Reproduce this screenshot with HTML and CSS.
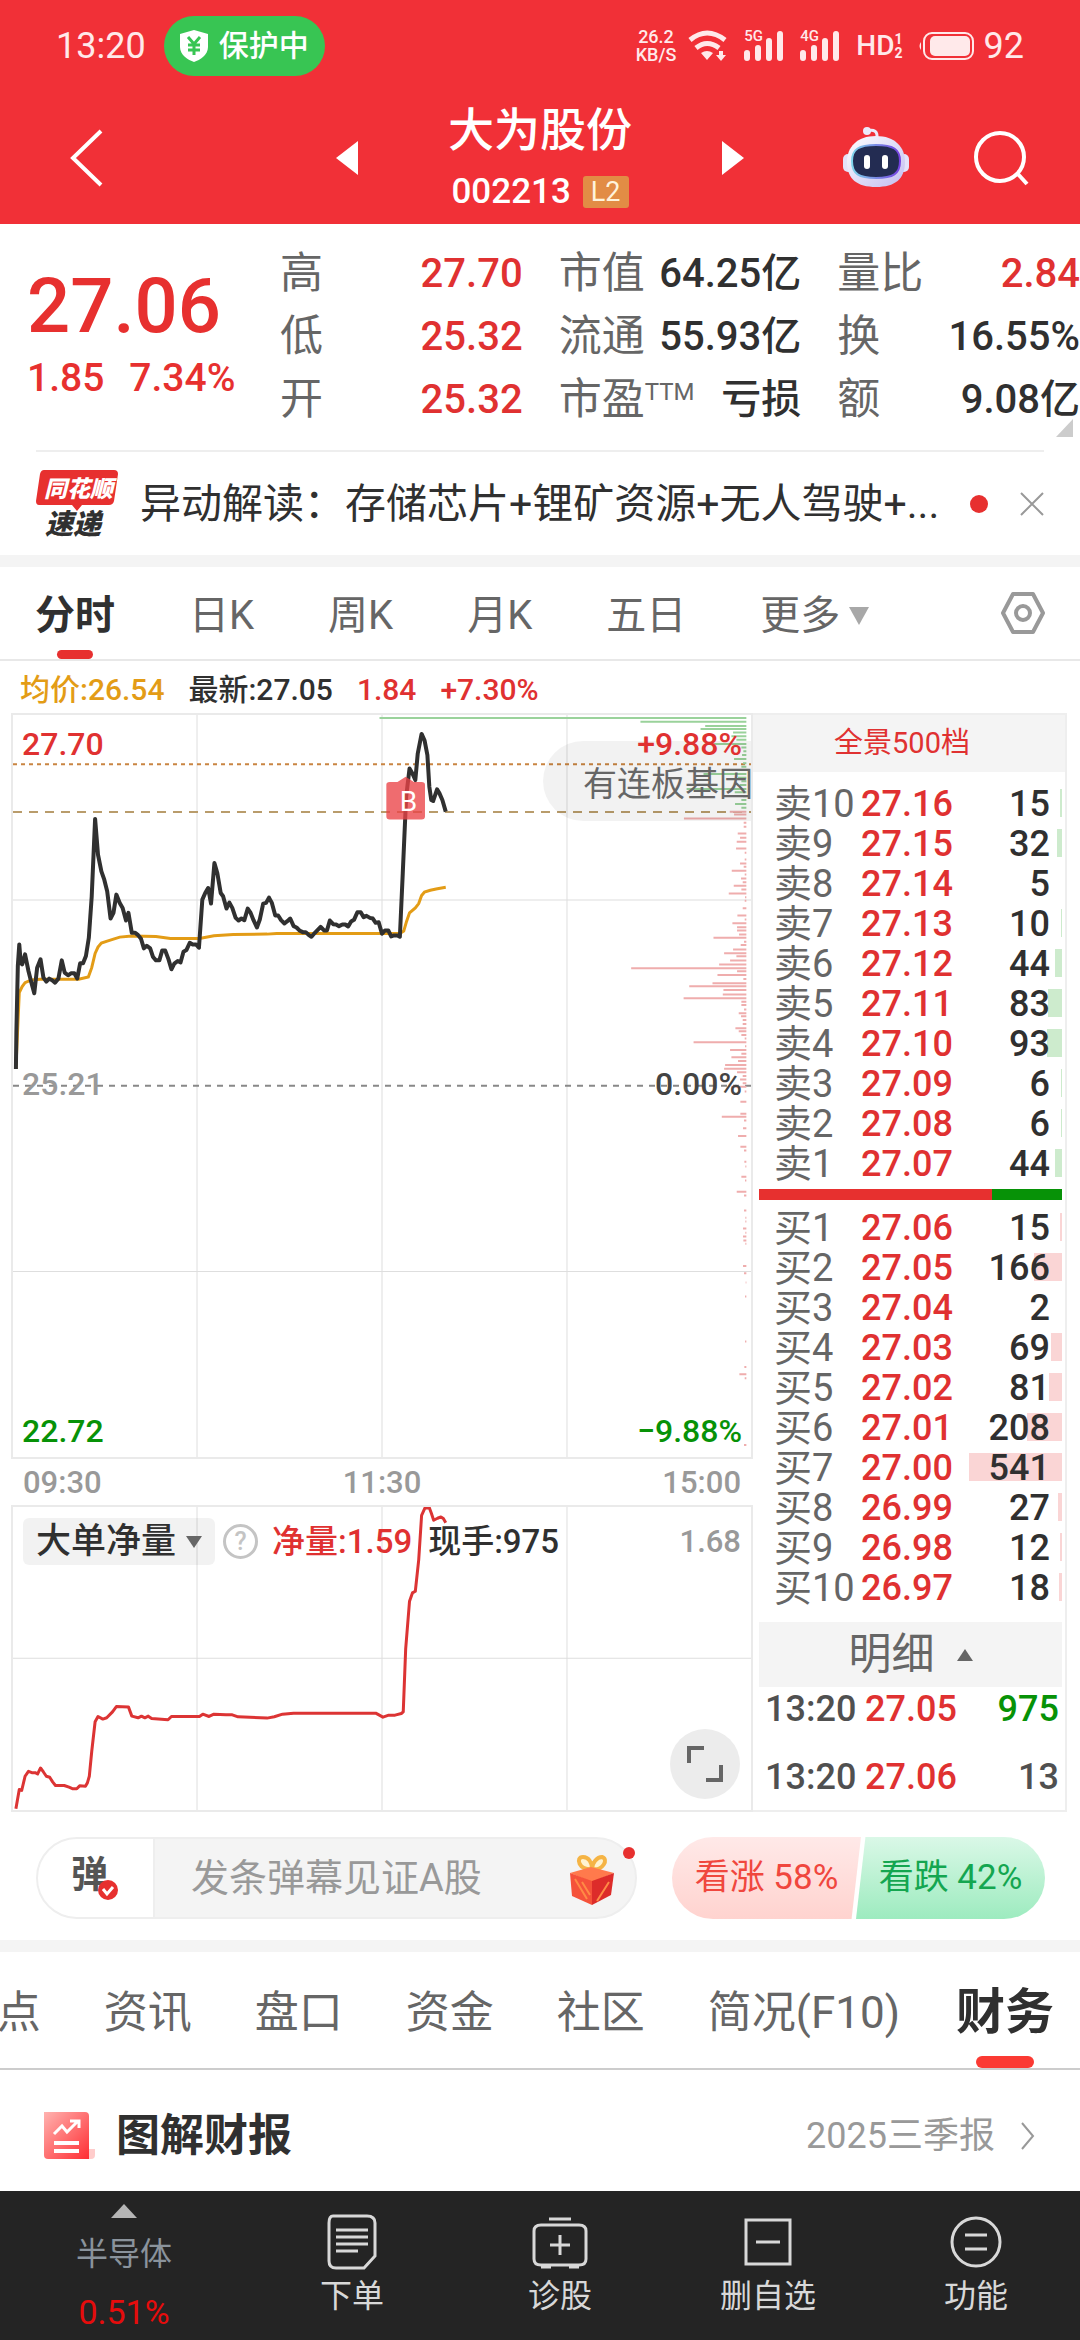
FILE: index.html
```html
<!DOCTYPE html>
<html lang="zh-CN">
<head>
<meta charset="utf-8">
<meta name="viewport" content="width=device-width, initial-scale=1">
<title>大为股份 002213</title>
<link rel="stylesheet" href="styles.css">
</head>
<body>
<header class="top">
  <div class="status">
    <time>13:20</time>
    <span class="guard">
      <svg width="28" height="32" viewBox="0 0 28 32"><path d="M14 0L28 4V17C28 25 20 30 14 32C8 30 0 25 0 17V4Z" fill="#fff"/><path d="M8 7L14 14L20 7M14 14V25M8 15H20M8 20H20" stroke="#38c553" stroke-width="3" fill="none"/></svg>
      保护中
    </span>
    <span class="status-right">
      <span class="speed"><span>26.2</span><span>KB/S</span></span>
      <svg class="wifi" width="40" height="30" viewBox="0 0 40 30"><g fill="none" stroke="#ffe9ea" stroke-width="5"><path d="M2 9Q19 -5 37 9"/><path d="M8 17Q19 8 31 17"/></g><path d="M13 22Q19 18 25 22L19 29ZM31 20H35V24H38L33 30L28 24H31Z" fill="#ffe9ea"/></svg>
      <span class="signal"><small>5G</small><svg width="40" height="30" viewBox="0 0 40 30"><path d="M3 22V27M14 17V27M25 10V27M36 3V27" stroke="#ffe9ea" stroke-width="6" stroke-linecap="round"/></svg></span>
      <span class="signal"><small>4G</small><svg width="40" height="30" viewBox="0 0 40 30"><path d="M3 22V27M14 17V27M25 10V27M36 3V27" stroke="#ffe9ea" stroke-width="6" stroke-linecap="round"/></svg></span>
      <span class="hd">HD<small>1<br>2</small></span>
      <svg class="battery" width="55" height="28" viewBox="0 0 55 28"><rect x="5" y="1" width="49" height="26" rx="8" fill="none" stroke="#ffe9ea" stroke-width="2"/><rect x="11" y="4" width="40" height="20" rx="5" fill="#ffe9ea"/><path d="M2 10Q-1 14 2 18Z" fill="#ffe9ea"/></svg>
      <span>92</span>
    </span>
  </div>
  <nav class="titlebar">
    <button class="bare back" aria-label="返回"><svg width="34" height="58" viewBox="0 0 34 58"><path d="M31 2L3 29L31 56" fill="none" stroke="#fff" stroke-width="4"/></svg></button>
    <div class="stock">
      <button class="bare" aria-label="上一只"><svg width="22" height="34" viewBox="0 0 22 34"><path d="M22 0V34L0 17Z" fill="#fff"/></svg></button>
      <div class="name"><h1>大为股份</h1><p>002213 <b>L2</b></p></div>
      <button class="bare" aria-label="下一只"><svg width="22" height="34" viewBox="0 0 22 34"><path d="M0 0V34L22 17Z" fill="#fff"/></svg></button>
    </div>
    <div class="tools">
      <button class="bare" aria-label="助手"><svg width="66" height="62" viewBox="0 0 66 62">
        <defs><linearGradient id="shell" x1="0" y1="0" x2="1" y2="1"><stop offset="0" stop-color="#fff"/><stop offset="1" stop-color="#c3bdf0"/></linearGradient><linearGradient id="rim" x1="0" x2="1"><stop offset="0" stop-color="#7fd4ea"/><stop offset="1" stop-color="#7440e0"/></linearGradient></defs>
        <path d="M24 4Q35 1 34 11" fill="none" stroke="#eceafa" stroke-width="3"/><circle cx="24" cy="4" r="4" fill="#eceafa"/>
        <rect x="0" y="27" width="66" height="18" rx="5" fill="#e4e2fa"/>
        <path d="M33 9C52 9 62 20 62 35C62 52 52 60 33 60C14 60 4 52 4 35C4 20 14 9 33 9Z" fill="url(#shell)"/>
        <path d="M33 18C50 18 57 22 57 34C57 47 50 51 33 51C16 51 9 47 9 34C9 22 16 18 33 18Z" fill="#232c52" stroke="url(#rim)" stroke-width="2"/>
        <rect x="21" y="28" width="6" height="14" rx="3" fill="#fff"/><rect x="39" y="28" width="6" height="14" rx="3" fill="#fff"/></svg></button>
      <button class="bare" aria-label="搜索"><svg width="56" height="56" viewBox="0 0 56 56"><circle cx="27" cy="27" r="24" fill="none" stroke="#fff" stroke-width="4"/><path d="M44 43L54 54" stroke="#fff" stroke-width="4"/></svg></button>
    </div>
  </nav>
</header>

<main>
<section class="quote">
  <div class="last"><strong>27.06</strong><p><span>1.85</span><span>7.34%</span></p></div>
  <dl>
    <div><dt>高</dt><dd class="red">27.70</dd></div>
    <div><dt>低</dt><dd class="red">25.32</dd></div>
    <div><dt>开</dt><dd class="red">25.32</dd></div>
  </dl>
  <dl>
    <div><dt>市值</dt><dd>64.25亿</dd></div>
    <div><dt>流通</dt><dd>55.93亿</dd></div>
    <div><dt class="ttm">市盈<small>TTM</small></dt><dd>亏损</dd></div>
  </dl>
  <dl>
    <div><dt>量比</dt><dd class="red">2.84</dd></div>
    <div><dt>换</dt><dd>16.55%</dd></div>
    <div><dt>额</dt><dd>9.08亿</dd></div>
  </dl>
  <svg class="corner" width="17" height="18" viewBox="0 0 17 18"><path d="M17 0V18H0Z" fill="#ccc"/></svg>
</section>

<section class="news">
  <svg class="logo" width="82" height="68" viewBox="0 0 82 68"><path d="M8 0H78Q82 0 82 4L78 31Q77 35 73 35H46L41 41L36 35H3Q0 35 0 31L4 4Q5 0 8 0Z" fill="#e7302f"/><text x="8" y="27" class="logo-a">同花顺</text><text x="9" y="64" class="logo-b">速递</text></svg>
  <a href="#news">异动解读：存储芯片+锂矿资源+无人驾驶+...</a>
  <i class="dot"></i>
  <button class="bare" aria-label="关闭"><svg width="24" height="24" viewBox="0 0 24 24"><path d="M1 1L23 23M23 1L1 23" stroke="#999" stroke-width="2"/></svg></button>
</section>

<nav class="periods">
  <a class="on" href="#m">分时</a><a href="#d">日K</a><a href="#w">周K</a><a href="#mo">月K</a><a href="#5d">五日</a><a href="#more">更多<svg width="20" height="18" viewBox="0 0 20 18"><path d="M0 0H20L10 18Z" fill="#a8a8a8"/></svg></a>
  <button class="bare settings" aria-label="设置"><svg width="44" height="44" viewBox="0 0 44 44"><path d="M12 3H32L42 22L32 41H12L2 22Z" fill="none" stroke="#999" stroke-width="4" stroke-linejoin="round"/><circle cx="22" cy="22" r="7" fill="none" stroke="#999" stroke-width="4"/></svg></button>
</nav>

<p class="legend"><span class="avg">均价:26.54</span><span>最新:27.05</span><span class="red">1.84</span><span class="red">+7.30%</span></p>

<section class="board">
  <div class="charts">
    <div class="price">
      <svg class="plot" viewBox="24 44 1528 2235" preserveAspectRatio="none">
        <path class="grid" d="M405 44V2279M788 44V2279M1171 44V2279M24 601H1552M24 1720H1552"/>
        <path class="dash-a" d="M24 192H1552"/><path class="dash-b" d="M24 336H1552"/><path class="dash-c" d="M24 1161H1552"/>
      </svg>
      <svg class="plot" viewBox="-1764 31 2223 1535" preserveAspectRatio="none">
        <path class="vol up" d="M445 37H-660M445 45H126M445 54H321M445 60H307M445 67H405M445 75H400M445 82H415M445 91H333M445 98H430M445 106H436M445 114H432M445 122H408M445 131H435M445 138H430M445 153H316M445 161H420M445 168H430M445 176H425M445 184H265M445 191H410M445 199H435M445 207H430M445 215H411M445 223H430"/>
        <path class="vol down" d="M445 231H395M445 237H408M445 245H257M445 254H437M445 262H437M445 276H419M445 285H426M445 293H416M445 307H414M445 316H440M445 330H440M445 338H426M445 345H437M445 353H401M445 361H440M445 369H429M445 377H434M445 384H407M445 392H430M445 400H392M445 408H441M445 415H440M445 431H434M445 446H418M445 454H440M445 462H403M445 470H417M445 477H417M445 485H423M445 492H346M445 500H438M445 507H428M445 516H405M445 524H378M445 530H415M445 539H396M445 547H363M445 555H98M445 561H417M445 569H358M445 577H436M445 586H343M445 592H273M445 600H376M445 609H374M445 617H256M445 624H430M445 631H430M445 640H438M445 648H422M445 654H429M445 662H434M445 670H434M445 679H412M445 685H422M445 693H430M445 700H440M445 708H286M445 716H441M445 724H396M445 732H430M445 739H400M445 747H420M445 755H381M445 763H378M445 770H417M445 778H434M445 785H426M445 793H434M445 800H400M445 810H440M445 831H427M445 856H427M445 862H371M445 870H438M445 886H435M445 902H420M445 924H427M445 932H438M445 955H439M445 965H442M445 986H430M445 994H441M445 1017H416M445 1025H438M445 1056H438M445 1071H442M445 1079H442M445 1093H435M445 1102H442M445 1110H435M445 1118H436M445 1125H442M445 1171H435M445 1186H438M445 1205H443M445 1234H441M445 1327H441M445 1380H439M445 1395H424M445 1403H440M445 1541H438"/>
      </svg>
      <svg class="plot" viewBox="24 44 1528 2235" preserveAspectRatio="none">
        <polyline class="line-avg" points="30,1110 37,880 43,862 49,850 62,842 80,840 160,840 180,833 187,805 194,762 200,743 207,731 219,725 232,719 245,713 270,710 320,711 350,717 410,717 440,709 480,705 550,704 570,702 825,702 833,695 839,665 845,640 857,625 864,612 870,588 876,577 888,572 900,568 920,563"/>
        <polyline class="line-price" points="30,1110 31,1000 34,800 37,735 40,790 43,795 49,765 56,815 62,850 68,882 74,805 81,780 87,835 93,847 99,838 105,843 111,850 118,838 125,783 131,820 138,828 144,822 151,822 157,838 163,792 169,792 175,770 181,715 187,590 194,357 200,465 207,515 213,540 219,575 226,657 232,640 238,585 245,610 251,625 258,663 263,640 270,700 277,700 283,707 289,718 295,747 301,739 308,747 314,773 320,783 327,783 333,753 339,753 346,780 352,810 358,793 365,785 371,789 377,757 383,752 390,730 396,735 403,735 409,745 416,600 422,580 428,565 434,612 441,490 447,520 454,580 459,590 466,627 472,609 478,625 485,655 491,663 497,657 503,662 510,627 516,640 522,662 529,684 535,660 542,612 548,610 554,594 560,610 567,648 573,648 579,662 586,672 592,665 598,657 605,680 611,684 617,693 624,698 630,698 636,706 642,712 649,700 655,691 661,682 668,693 674,693 680,663 687,674 693,675 699,680 706,675 712,675 718,681 724,666 730,661 737,638 744,638 750,653 756,649 763,655 769,657 775,670 781,668 788,703 794,693 801,693 807,711 813,708 820,708 825,712 831,520 838,290 845,205 851,220 857,240 862,160 870,101 876,120 882,165 886,260 890,300 894,303 898,285 902,268 907,280 913,300 920,335"/>
        <g fill="#e83038" fill-opacity=".8"><ellipse cx="837" cy="192" rx="12" ry="17"/><ellipse cx="894" cy="276" rx="12" ry="17"/></g>
        <path d="M804 246H820L837 230L854 246H870Q877 246 877 254V350Q877 359 870 359H804Q797 359 797 350V254Q797 246 804 246Z" fill="#eb4347" fill-opacity=".78"/>
      </svg>
      <span class="tag-b">B</span>
      <span class="hint">有连板基因</span>
      <span class="mark tl red">27.70</span><span class="mark tr red">+9.88%</span>
      <span class="mark ml">25.21</span><span class="mark mr">0.00%</span>
      <span class="mark bl green">22.72</span><span class="mark br green">−9.88%</span>
    </div>
    <div class="axis"><span>09:30</span><span>11:30</span><span>15:00</span></div>
    <div class="flow">
      <svg class="plot" viewBox="24 380 1528 917" preserveAspectRatio="none">
        <path class="grid" d="M405 380V1297M788 380V1297M1171 380V1297M24 838H1552"/>
        <polyline class="line-flow" points="30,1293 37,1235 42,1238 49,1195 56,1180 63,1184 70,1184 75,1188 81,1170 87,1182 93,1195 100,1198 106,1212 112,1223 130,1223 140,1228 148,1233 156,1233 162,1224 174,1225 178,1215 182,1195 187,1120 194,1030 200,1014 210,1022 218,1018 230,1000 238,984 263,985 270,1013 283,1018 290,1013 297,1018 304,1013 311,1020 345,1024 352,1014 410,1014 417,1007 430,1014 440,1007 465,1009 478,1009 490,1015 550,1019 565,1015 582,1007 605,1004 775,1004 790,1016 802,1010 815,1010 828,1005 832,1000 837,810 845,665 851,640 857,635 864,540 870,405 877,383 886,382 890,398 895,420 903,414 910,410 915,415 920,428"/>
      </svg>
      <div class="flow-head">
        <button class="pick">大单净量<svg width="16" height="12" viewBox="0 0 16 12"><path d="M0 0H16L8 12Z" fill="#666"/></svg></button>
        <button class="help" aria-label="说明">?</button>
        <span class="red">净量:1.59</span><span>现手:975</span><span class="max">1.68</span>
      </div>
      <button class="expand" aria-label="全屏"><svg width="36" height="36" viewBox="0 0 36 36"><path d="M2 17V2H17M34 19V34H19" fill="none" stroke="#666" stroke-width="4"/></svg></button>
    </div>
  </div>

  <aside class="book">
    <a class="depth" href="#depth">全景500档</a>
    <table class="sell">
      <tr><th>卖10</th><td>27.16</td><td>15<i style="width:2px"></i></td></tr>
      <tr><th>卖9</th><td>27.15</td><td>32<i style="width:5px"></i></td></tr>
      <tr><th>卖8</th><td>27.14</td><td>5</td></tr>
      <tr><th>卖7</th><td>27.13</td><td>10<i style="width:1px"></i></td></tr>
      <tr><th>卖6</th><td>27.12</td><td>44<i style="width:7px"></i></td></tr>
      <tr><th>卖5</th><td>27.11</td><td>83<i style="width:14px"></i></td></tr>
      <tr><th>卖4</th><td>27.10</td><td>93<i style="width:15px"></i></td></tr>
      <tr><th>卖3</th><td>27.09</td><td>6<i style="width:1px"></i></td></tr>
      <tr><th>卖2</th><td>27.08</td><td>6<i style="width:1px"></i></td></tr>
      <tr><th>卖1</th><td>27.07</td><td>44<i style="width:7px"></i></td></tr>
    </table>
    <div class="ratio"><i style="width:77%"></i></div>
    <table class="buy">
      <tr><th>买1</th><td>27.06</td><td>15<i style="width:2px"></i></td></tr>
      <tr><th>买2</th><td>27.05</td><td>166<i style="width:28px"></i></td></tr>
      <tr><th>买3</th><td>27.04</td><td>2</td></tr>
      <tr><th>买4</th><td>27.03</td><td>69<i style="width:11px"></i></td></tr>
      <tr><th>买5</th><td>27.02</td><td>81<i style="width:13px"></i></td></tr>
      <tr><th>买6</th><td>27.01</td><td>208<i style="width:35px"></i></td></tr>
      <tr><th>买7</th><td>27.00</td><td>541<i style="width:93px"></i></td></tr>
      <tr><th>买8</th><td>26.99</td><td>27<i style="width:4px"></i></td></tr>
      <tr><th>买9</th><td>26.98</td><td>12<i style="width:2px"></i></td></tr>
      <tr><th>买10</th><td>26.97</td><td>18<i style="width:3px"></i></td></tr>
    </table>
    <button class="detail">明细<svg width="16" height="12" viewBox="0 0 16 12"><path d="M8 0L16 12H0Z" fill="#666"/></svg></button>
    <div class="tick"><span>13:20</span><span class="red">27.05</span><span class="green">975</span></div>
    <div class="tick"><span>13:20</span><span class="red">27.06</span><span>13</span></div>
  </aside>
</section>

<section class="talk">
  <div class="danmu">
    <button class="toggle" aria-label="弹幕开关">弹<svg width="20" height="20" viewBox="0 0 20 20"><circle cx="10" cy="10" r="10" fill="#e7302f"/><path d="M5 9L9 14L15 7" fill="none" stroke="#fff" stroke-width="3"/></svg></button>
    <input type="text" aria-label="弹幕" placeholder="发条弹幕见证A股">
    <svg class="gift" width="46" height="50" viewBox="0 0 46 50"><path d="M23 14C10 16 6 2 14 2C20 2 23 8 23 14C23 8 28 2 33 2C40 4 34 16 23 14Z" fill="#fff3d0" stroke="#f5b445" stroke-width="4"/><path d="M1 18L22 12L45 18L23 27Z" fill="#ff7a4c"/><path d="M1 18L23 26V50L3 41Z" fill="#f5523a"/><path d="M45 18L23 26V50L42 40Z" fill="#dd2c2a"/><path d="M6 24L18 44M13 27L21 40M28 46L40 27" stroke="#ff8a45" stroke-width="2"/></svg>
    <i class="badge"></i>
  </div>
  <div class="vote"><button class="bull">看涨 58%</button><button class="bear">看跌 42%</button></div>
</section>

<nav class="sections">
  <a href="#t1">点</a><a href="#t2">资讯</a><a href="#t3">盘口</a><a href="#t4">资金</a><a href="#t5">社区</a><a href="#t6">简况(F10)</a><a class="on" href="#t7">财务</a>
</nav>

<section class="report">
  <svg width="51" height="47" viewBox="0 0 51 47"><defs><linearGradient id="doc" x1="0" y1="0" x2="1" y2="1"><stop offset="0" stop-color="#ffb3b0"/><stop offset="1" stop-color="#ff2e33"/></linearGradient></defs><path d="M40 37H51V43Q51 47 47 47H40Z" fill="#ffcccb"/><path d="M0 0H41Q45 0 45 4V47H4Q0 47 0 43Z" fill="url(#doc)"/><path d="M10 22L18 14L23 20L33 10M26 9H35V16" fill="none" stroke="#fff" stroke-width="3"/><path d="M10 31H35M10 39H35" stroke="#fff" stroke-width="4"/></svg>
  <h2>图解财报</h2>
  <a href="#report">2025三季报<svg width="14" height="28" viewBox="0 0 14 28"><path d="M1 1L12 14L1 27" fill="none" stroke="#999" stroke-width="2"/></svg></a>
</section>
</main>

<footer class="dock">
  <a class="sector" href="#sector"><svg width="26" height="14" viewBox="0 0 26 14"><path d="M13 0L26 14H0Z" fill="#b5b5b5"/></svg><span>半导体</span><b>0.51%</b></a>
  <a href="#order"><svg width="56" height="56" viewBox="0 0 56 56"><path d="M9 2H43Q51 2 51 9V42L40 54H12Q5 54 5 47V9Q5 2 9 2ZM12 16H44M12 23H44M12 30H44M12 37H34"/></svg><span>下单</span></a>
  <a href="#diagnose"><svg width="56" height="56" viewBox="0 0 56 56"><path d="M17 5H39M9 11H47Q54 11 54 17V45Q54 51 47 51H9Q2 51 2 45V17Q2 11 9 11ZM28 21V41M18 31H38M9 53H19M37 53H47"/></svg><span>诊股</span></a>
  <a href="#remove"><svg width="56" height="56" viewBox="0 0 56 56"><path d="M6 6H50V50H6ZM16 28H40"/></svg><span>删自选</span></a>
  <a href="#tools"><svg width="56" height="56" viewBox="0 0 56 56"><circle cx="28" cy="28" r="24"/><path d="M17 21H39M17 35H39"/></svg><span>功能</span></a>
</footer>
</body>
</html>
```
FILE: styles.css
```css
* { box-sizing: border-box; }
body {
  margin: 0;
  background: #fff;
  color: #303030;
  font-family: Roboto, "Noto Sans CJK SC", sans-serif;
  font-size: 32px;
  line-height: 40px;
  overflow-x: hidden;
}
h1, h2, p, dl, dd { margin: 0; }
a { color: inherit; text-decoration: none; }
button, input { font: inherit; color: inherit; border: 0; padding: 0; }
svg { display: block; flex: none; overflow: visible; }
i { display: block; }
.bare { background: none; }
.red { color: #e03131; }
.green { color: #079207; }

/* header */
.top { background: #f13037; color: #fff; }
.status {
  display: flex;
  align-items: center;
  height: 92px;
  padding: 0 56px;
  font-size: 36px;
  color: #ffe9ea;
}
.guard {
  display: flex;
  align-items: center;
  gap: 11px;
  margin-left: 18px;
  padding: 10px 16px;
  border-radius: 30px;
  background: #38c553;
  color: #fff;
  font-size: 30px;
  font-weight: 500;
}
.status-right { display: flex; align-items: center; gap: 16px; margin-left: auto; }
.speed { display: grid; margin-right: -4px; font-size: 18px; line-height: 18px; text-align: center; font-weight: 500; }
.signal { position: relative; }
.signal small { position: absolute; left: 0; top: -2px; font-size: 15px; line-height: 15px; font-weight: 500; }
.hd { display: flex; align-items: center; font-size: 28px; font-weight: 500; }
.hd small { font-size: 14px; line-height: 14px; font-weight: 700; }
.battery { margin-right: -6px; }
.titlebar {
  display: grid;
  grid-template-columns: 1fr 408px 1fr;
  align-items: center;
  height: 132px;
  padding: 0 51px;
}
.back { justify-self: start; margin-left: 19px; }
.stock { display: flex; align-items: center; justify-content: space-between; }
.name { text-align: center; }
.name h1 { font-size: 46px; line-height: 68px; font-weight: 500; }
.name p { display: flex; align-items: center; justify-content: center; gap: 12px; font-size: 35px; line-height: 56px; font-weight: 500; }
.name b { padding: 0 8px; border-radius: 3px; background: #e28c45; color: #fff3dc; font-size: 27px; line-height: 32px; font-weight: 400; }
.tools { display: flex; align-items: center; justify-content: flex-end; gap: 64px; }

/* quote */
.quote {
  position: relative;
  display: grid;
  grid-template-columns: 217px 1fr 1fr 1fr;
  gap: 36px;
  padding: 18px 0 19px 27px;
}
.last { padding-top: 24px; color: #e7302f; font-weight: 500; }
.last strong { display: block; font-size: 76px; line-height: 80px; font-weight: 500; }
.last p { display: flex; gap: 25px; font-size: 39px; line-height: 64px; }
.quote dl > div { display: flex; justify-content: space-between; line-height: 63px; }
.quote dt { font-size: 43px; color: #666; }
.quote dd { font-size: 40px; font-weight: 500; }
.ttm { display: flex; }
.ttm small { font-size: 24px; line-height: 48px; }
.corner { position: absolute; right: 7px; bottom: 13px; }

/* news */
.news {
  display: flex;
  align-items: center;
  height: 105px;
  margin: 0 36px;
  border-top: 2px solid #eee;
  font-size: 41px;
}
.logo-a, .logo-b { font-weight: 900; font-style: italic; }
.logo-a { font-size: 23px; fill: #fff; }
.logo-b { font-size: 28px; fill: #303030; }
.news a { flex: 1; margin-left: 22px; white-space: nowrap; }
.dot { width: 18px; height: 18px; margin: 0 32px 0 0; border-radius: 50%; background: #e7302f; }

/* period tabs */
.periods {
  display: flex;
  align-items: center;
  gap: 74px;
  height: 106px;
  padding: 0 35px;
  border-top: 12px solid #f4f4f4;
  border-bottom: 2px solid #e8e8e8;
  color: #666;
  font-size: 40px;
}
.periods a { position: relative; display: flex; align-items: center; gap: 9px; padding-top: 6px; line-height: 86px; }
.periods .on { color: #303030; font-weight: 700; }
.on::after {
  content: "";
  position: absolute;
  left: 50%;
  bottom: 0;
  width: 36px;
  height: 9px;
  margin-left: -18px;
  border-radius: 5px;
  background: #e7302f;
}
.settings { margin-left: auto; }
.legend { display: flex; gap: 24px; padding: 9px 20px 3px; font-size: 30px; font-weight: 500; line-height: 40px; }
.legend .avg { color: #e39c16; }

/* chart and order book */
.board { display: flex; padding: 0 13px 0 11px; }
.charts { flex: 1; display: flex; flex-direction: column; }
.price, .flow { position: relative; border: 2px solid #eaeaea; overflow: hidden; }
.price { flex: 747 1 0; }
.flow { flex: 305 1 0; }
.plot { position: absolute; left: 0; top: 0; width: 100%; height: 100%; }
.plot * { vector-effect: non-scaling-stroke; fill: none; }
.plot g *, .plot path[fill] { fill: inherit; }
.plot path[fill] { fill: #eb4347; }
.grid { stroke: #dedede; stroke-width: 1px; }
.dash-a { stroke: #c98542; stroke-width: 2px; stroke-dasharray: 4 4; }
.dash-b { stroke: #b99c6b; stroke-width: 2px; stroke-dasharray: 9 7; }
.dash-c { stroke: #888; stroke-width: 2px; stroke-dasharray: 6 6; }
.vol { stroke-width: 2px; }
.up { stroke: #9ad29b; }
.down { stroke: #efadad; }
.line-avg { stroke: #e39c16; stroke-width: 3px; }
.line-price { stroke: #303030; stroke-width: 4px; stroke-linejoin: round; }
.line-flow { stroke: #dc3434; stroke-width: 3px; stroke-linejoin: round; }
.mark { position: absolute; font-weight: 500; font-size: 32px; line-height: 32px; }
.tl, .ml, .bl { left: 9px; }
.tr, .mr, .br { right: 9px; }
.tl, .tr { top: 13px; }
.ml, .mr { top: 50%; margin-top: -18px; }
.bl, .br { bottom: 10px; }
.ml { color: #999; }
.mr { color: #444; }
.tag-b { position: absolute; left: 51%; top: 70px; width: 38px; text-align: center; color: #fff; font-size: 28px; line-height: 34px; }
.hint {
  position: absolute;
  right: 0;
  top: 26px;
  width: 208px;
  padding: 6px 0 0 40px;
  border-radius: 40px 0 0 40px;
  background: rgba(0, 0, 0, .05);
  color: #666;
  font-size: 34px;
  line-height: 74px;
  white-space: nowrap;
}
.axis { display: flex; justify-content: space-between; padding: 2px 12px 0; color: #999; font-weight: 500; line-height: 44px; font-size: 31px; }
.flow-head { position: relative; display: flex; align-items: center; padding: 11px 10px; font-weight: 500; font-size: 33px; }
.pick { display: flex; align-items: center; gap: 10px; padding: 0 13px; border-radius: 6px; background: rgba(0, 0, 0, .05); font-size: 35px; line-height: 47px; }
.help { width: 35px; height: 35px; margin: 0 14px 0 8px; border: 3px solid #c4c4c4; border-radius: 50%; background: none; color: #c4c4c4; font-size: 25px; line-height: 28px; }
.flow-head .red { margin-right: 16px; }
.max { margin-left: auto; color: #999; font-size: 31px; }
.expand { position: absolute; right: 11px; bottom: 11px; display: grid; place-items: center; width: 70px; height: 70px; border-radius: 50%; background: #ececec; }

.book { width: 314px; border: 2px solid #eee; border-left: 0; padding: 0 3px 11px 6px; }
.depth { display: block; margin: 0 -3px 12px -6px; padding-right: 14px; background: #f4f4f4; color: #e03131; font-size: 29px; line-height: 57px; text-align: center; }
table { width: 100%; border-collapse: collapse; table-layout: fixed; font-size: 36px; font-weight: 500; }
th, td { height: 40px; padding: 0; line-height: 40px; text-align: left; white-space: nowrap; }
th { width: 102px; padding-left: 15px; color: #666; font-size: 38px; font-weight: 400; }
td { color: #e03131; }
td + td { position: relative; width: 104px; padding-right: 12px; color: #303030; text-align: right; }
td i { position: absolute; right: 0; top: 5px; height: 28px; z-index: -1; }
.sell i { background: #cdebcd; }
.buy i { background: #fad5d5; }
.ratio { height: 11px; margin: 5px 0 8px; background: #079207; }
.ratio i { height: 100%; background: #e7302f; }
.detail { display: flex; align-items: center; justify-content: center; gap: 22px; width: 100%; margin-top: 14px; background: #f4f4f4; color: #666; font-size: 43px; line-height: 65px; }
.tick { display: grid; grid-template-columns: 100px 1fr 1fr; padding: 0 3px 0 6px; color: #505050; font-size: 36px; line-height: 44px; font-weight: 500; }
.tick :last-child { text-align: right; }
.tick + .tick { margin-top: 24px; }

/* comments and vote */
.talk { display: flex; gap: 35px; padding: 25px 35px 21px 36px; border-bottom: 12px solid #f4f4f4; }
.danmu { position: relative; flex: 1; min-width: 0; display: flex; align-items: center; height: 82px; border: 2px solid #eee; border-radius: 41px; background: #f4f4f4; }
.toggle { position: relative; flex: none; width: 117px; height: 100%; padding: 0 12px 5px 0; border-right: 2px solid #eee; border-radius: 40px 0 0 40px; background: #fff; color: #555; font-size: 37px; font-weight: 700; text-align: center; }
.toggle svg { position: absolute; left: 60px; top: 41px; }
.danmu input { flex: 1; width: 0; min-width: 0; padding-left: 36px; background: none; font-size: 38px; line-height: 44px; }
.danmu input::placeholder { color: #999; opacity: 1; }
.gift { margin: 4px 20px 0 0; }
.badge { position: absolute; right: 0; top: 8px; width: 12px; height: 12px; border-radius: 50%; background: #e7302f; }
.vote { display: flex; flex: none; width: 373px; border-radius: 41px; overflow: hidden; font-size: 35px; white-space: nowrap; }
.vote button { flex: 1; }
.bull { background: linear-gradient(#ffe9e8, #ffd3cf); color: #f0473e; clip-path: polygon(0 0, 100% 0, 95% 100%, 0 100%); }
.bear { margin-left: -5px; background: linear-gradient(#daf8e7, #9debbf); color: #14a650; clip-path: polygon(5% 0, 100% 0, 100% 100%, 0 100%); }

/* section tabs */
.sections { display: flex; justify-content: flex-end; align-items: center; gap: 63px; height: 118px; padding-right: 26px; border-bottom: 2px solid #ccc; overflow: hidden; color: #666; font-size: 44px; white-space: nowrap; }
.sections a { position: relative; flex: none; padding-top: 6px; line-height: 110px; }
.sections .on { margin-left: -7px; color: #303030; font-size: 49px; font-weight: 700; }
.sections .on::after { width: 58px; height: 12px; margin-left: -29px; border-radius: 6px; background: #fb3a33; }

.report { display: flex; align-items: center; height: 121px; padding: 10px 45px 0 44px; }
.report h2 { margin-left: 21px; font-size: 44px; font-weight: 700; }
.report a { display: flex; align-items: center; gap: 26px; margin-left: auto; color: #999; font-size: 36px; }

/* dock */
.dock { display: flex; height: 149px; background: #242424; color: #d8d8d8; }
.dock a { flex: 208 1 0; display: flex; flex-direction: column; align-items: center; padding-top: 23px; line-height: 53px; }
.dock a svg { fill: none; stroke: #d8d8d8; stroke-width: 3px; }
.dock .sector { flex-grow: 248; padding-top: 13px; color: #8a939c; line-height: 50px; }
.dock .sector svg { stroke: none; }
.sector span { margin: 11px 0 8px; }
.sector b { color: #e60c0c; font-weight: 400; font-size: 34px; }
```
